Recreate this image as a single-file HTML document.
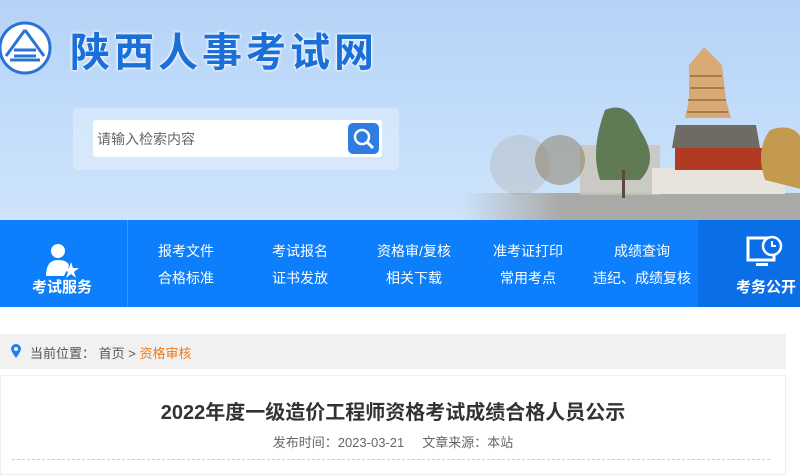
<!DOCTYPE html>
<html><head><meta charset="utf-8"><style>
*{margin:0;padding:0;box-sizing:border-box}
body{width:800px;height:462px;overflow:hidden;background:#fff;font-family:"Liberation Sans","Noto Sans CJK SC",sans-serif}
.hd{position:absolute;left:0;top:0;width:800px;height:220px;background:linear-gradient(180deg,#b5d3f8 0%,#c1dcfa 50%,#cfe4fb 100%)}
.logo{position:absolute;left:70px;top:20px;font-size:40px;font-weight:bold;color:#1a6fd8;letter-spacing:4px;text-shadow:0 0 3px #fff,0 0 3px #fff}
.sbox{position:absolute;left:73px;top:108px;width:326px;height:62px;background:rgba(255,255,255,.3);border-radius:5px}
.sin{position:absolute;left:93px;top:120px;width:289px;height:37px;background:#fff;border-radius:3px;font-size:14px;color:#666;padding:9px 4px}
.sbt{position:absolute;left:348px;top:123px;width:31px;height:31px;background:#2f7de0;border-radius:5px}
.nav{position:absolute;left:0;top:220px;width:800px;height:87px;background:#0d7efc}
.nl{position:absolute;left:0;top:0;width:128px;height:87px;border-right:1px solid #3d95fc}
.nr{position:absolute;left:698px;top:0;width:102px;height:87px;background:#0a6fe6}
.nav .t{position:absolute;color:#fff;font-size:14px;transform:translateX(-50%);white-space:nowrap}
.nav .b{font-weight:bold;font-size:15px}
.bc{position:absolute;left:0;top:334px;width:786px;height:35px;background:#f1f1f1;font-size:13px;color:#555;padding:9px 0 0 30px}
.box{position:absolute;left:0;top:375px;width:786px;height:100px;border:1px solid #eee}
.tt{position:absolute;left:0;width:786px;top:396px;text-align:center;font-size:20px;font-weight:bold;color:#333}
.mt{position:absolute;left:0;width:786px;top:432px;text-align:center;font-size:13px;color:#666}
.dl{position:absolute;left:12px;top:459px;width:758px;border-top:1px dashed #ccc}
</style></head><body>
<div class="hd">
<svg style="position:absolute;left:0;top:20px" width="56" height="56" viewBox="0 0 56 56"><circle cx="25" cy="28" r="25" fill="#fff" stroke="#2a73d6" stroke-width="3"/><path d="M25 10 L6 36 M25 10 L44 36 M14 30 L36 30 M10 40 L40 40 M14 36 L36 36" stroke="#2a73d6" stroke-width="3" fill="none"/></svg>
<div class="logo">陕西人事考试网</div>
<svg style="position:absolute;left:460px;top:30px" width="340" height="190" viewBox="0 0 340 190">
<defs><linearGradient id="g" x1="0" x2="1"><stop offset="0" stop-color="#a9aaa8" stop-opacity="0"/><stop offset=".3" stop-color="#a9aaa8" stop-opacity="1"/></linearGradient></defs>
<rect x="0" y="163" width="340" height="27" fill="url(#g)"/>
<rect x="120" y="115" width="80" height="50" fill="#c9c3b8" opacity=".8"/>
<circle cx="60" cy="135" r="30" fill="#a99a88" opacity=".25"/>
<circle cx="100" cy="130" r="25" fill="#8a7a5a" opacity=".5"/>
<rect x="192" y="138" width="133" height="26" fill="#e8e4dc"/>
<path d="M229 35 L244 17 L262 35 L266 70 L271 88 L225 88 L229 70Z" fill="#d9aa76"/>
<path d="M230 46 H262 M230 58 H264 M228 70 H266 M227 82 H268" stroke="#a77a50" stroke-width="2"/>
<path d="M216 95 L296 95 L300 118 L212 118Z" fill="#6f6a62"/>
<rect x="215" y="118" width="88" height="22" fill="#b23a22"/>
<path d="M145 80 Q168 70 180 100 Q200 130 180 150 L140 150 Q130 120 145 80Z" fill="#5f7a55"/>
<rect x="162" y="140" width="3" height="28" fill="#5a4a3a"/>
<path d="M310 100 Q340 90 345 120 L345 160 L305 150 Q295 120 310 100Z" fill="#c49a50"/>
</svg>
<div class="sbox"></div>
<div class="sin">请输入检索内容</div>
<div class="sbt"><svg width="31" height="31"><circle cx="14" cy="14" r="7" fill="none" stroke="#fff" stroke-width="2.5"/><path d="M19 19 L25 25" stroke="#fff" stroke-width="3"/></svg></div>
</div>
<div class="nav">
<div class="nl"><svg style="position:absolute;left:44px;top:22px" width="36" height="38"><circle cx="14" cy="9" r="7" fill="#fff"/><path d="M2 34 Q2 18 14 18 Q24 18 25 24 L20 34Z" fill="#fff"/><path d="M27 20 L29 26 L35 26 L30 30 L32 36 L27 32 L22 36 L24 30 L19 26 L25 26Z" fill="#fff"/></svg><div class="t b" style="left:62px;top:56px">考试服务</div></div>
<div class="t" style="left:186px;top:21px">报考文件</div><div class="t" style="left:186px;top:48px">合格标准</div>
<div class="t" style="left:300px;top:21px">考试报名</div><div class="t" style="left:300px;top:48px">证书发放</div>
<div class="t" style="left:414px;top:21px">资格审/复核</div><div class="t" style="left:414px;top:48px">相关下载</div>
<div class="t" style="left:528px;top:21px">准考证打印</div><div class="t" style="left:528px;top:48px">常用考点</div>
<div class="t" style="left:642px;top:21px">成绩查询</div><div class="t" style="left:642px;top:48px">违纪、成绩复核</div>
<div class="nr"><svg style="position:absolute;left:48px;top:14px" width="40" height="36"><rect x="2" y="4" width="26" height="22" fill="none" stroke="#fff" stroke-width="3"/><circle cx="26" cy="12" r="9" fill="#0a6fe6" stroke="#fff" stroke-width="2.5"/><path d="M26 7 V12 H30" stroke="#fff" stroke-width="2" fill="none"/><rect x="10" y="29" width="12" height="3" fill="#fff"/></svg><div class="t b" style="left:68px;top:56px">考务公开</div></div>
</div>
<div class="bc"><svg style="position:absolute;left:11px;top:10px" width="10" height="15"><path d="M5 14 Q0 7 0 5 A5 5 0 0 1 10 5 Q10 7 5 14Z" fill="#1a7ef0"/><circle cx="5" cy="5" r="2" fill="#f1f1f1"/></svg>当前位置：&nbsp;首页 &gt; <span style="color:#f07a1a">资格审核</span></div>
<div class="box"></div>
<div class="tt">2022年度一级造价工程师资格考试成绩合格人员公示</div>
<div class="mt">发布时间：2023-03-21 &nbsp;&nbsp;&nbsp;&nbsp;文章来源：本站</div>
<div class="dl"></div>
</body></html>
